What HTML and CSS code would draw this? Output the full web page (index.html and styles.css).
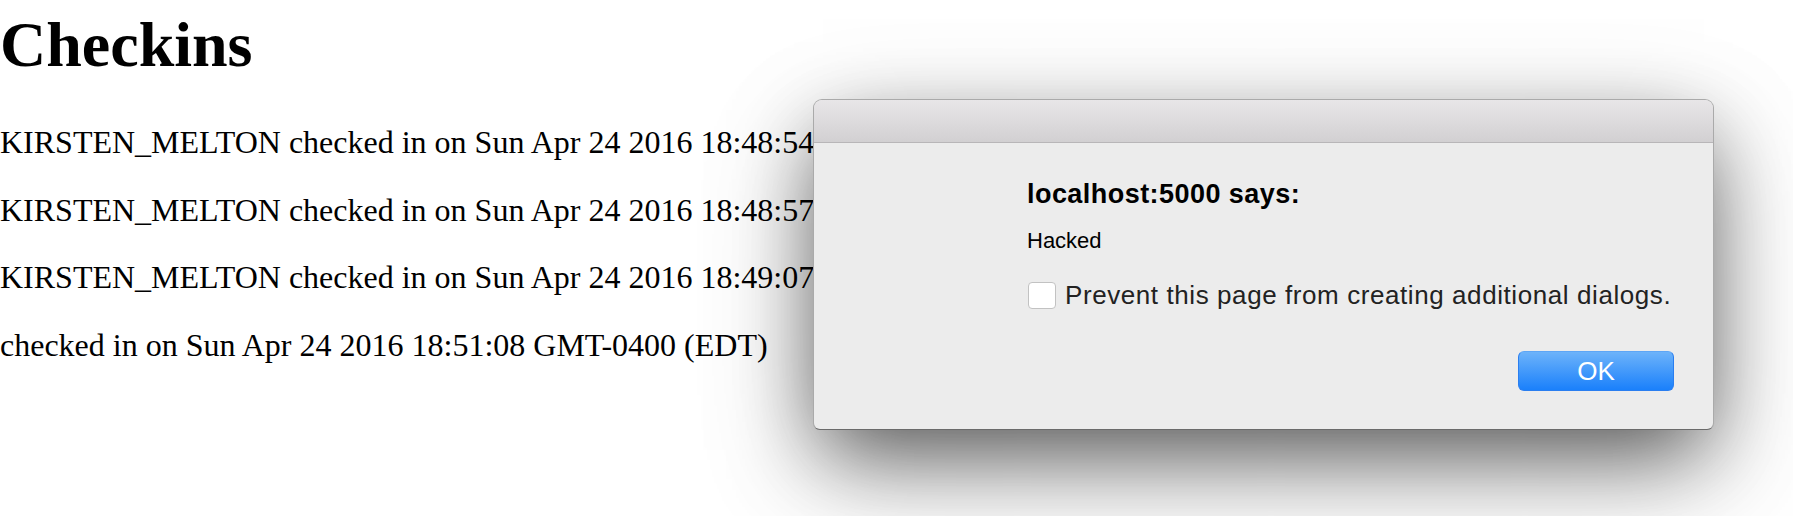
FILE: index.html
```html
<!DOCTYPE html>
<html>
<head>
<meta charset="utf-8">
<title>Checkins</title>
<link rel="stylesheet" href="styles.css">
</head>
<body>
<main class="page">
  <h1 class="title">Checkins</h1>
  <p class="checkin">KIRSTEN_MELTON checked in on Sun Apr 24 2016 18:48:54 GMT-0400 (EDT)</p>
  <p class="checkin">KIRSTEN_MELTON checked in on Sun Apr 24 2016 18:48:57 GMT-0400 (EDT)</p>
  <p class="checkin">KIRSTEN_MELTON checked in on Sun Apr 24 2016 18:49:07 GMT-0400 (EDT)</p>
  <p class="checkin"> checked in on Sun Apr 24 2016 18:51:08 GMT-0400 (EDT)</p>
</main>

<div class="dialog" role="alertdialog">
  <div class="dialog-titlebar"></div>
  <div class="dialog-body">
    <div class="dialog-heading">localhost:5000 says:</div>
    <div class="dialog-message">Hacked</div>
    <label class="dialog-check">
      <span class="checkbox"></span>
      <span class="check-label">Prevent this page from creating additional dialogs.</span>
    </label>
    <div class="dialog-actions">
      <button class="ok-button" type="button">OK</button>
    </div>
  </div>
</div>
</body>
</html>
```
FILE: styles.css
```css
html, body {
  margin: 0;
  padding: 0;
  background: #ffffff;
}

body {
  font-family: "Liberation Serif", "Times New Roman", serif;
  color: #000;
  overflow: hidden;
}

.page {
  padding: 0;
}

.title {
  font-size: 64px;
  line-height: 64px;
  font-weight: bold;
  margin: 13px 0 48px 0;
}

.checkin {
  font-size: 32px;
  line-height: 35.6px;
  margin: 32px 0;
  white-space: nowrap;
}

/* alert dialog overlay */
.dialog {
  position: absolute;
  left: 813px;
  top: 99px;
  width: 901px;
  height: 331px;
  box-sizing: border-box;
  background: #ececec;
  border: 1px solid rgba(0, 0, 0, 0.28);
  border-bottom-color: rgba(0, 0, 0, 0.55);
  border-radius: 9px 9px 7px 7px;
  box-shadow: 0 30px 80px -10px rgba(0, 0, 0, 0.6),
              0 40px 120px 0 rgba(0, 0, 0, 0.2);
  display: flex;
  flex-direction: column;
  font-family: "Liberation Sans", Arial, sans-serif;
  overflow: hidden;
}

.dialog-titlebar {
  height: 42px;
  flex: none;
  background: linear-gradient(to bottom, #e8e6e8, #d2d0d2);
  border-bottom: 1px solid #b8b6b8;
  border-radius: 8px 8px 0 0;
}

.dialog-body {
  flex: 1;
  display: flex;
  flex-direction: column;
  padding: 36px 39px 0 213px;
}

.dialog-heading {
  font-size: 27px;
  line-height: 30px;
  font-weight: bold;
  letter-spacing: 0.45px;
  color: #000;
}

.dialog-message {
  margin-top: 19px;
  font-size: 22px;
  line-height: 26px;
  color: #000;
}

.dialog-check {
  margin-top: 26px;
  display: flex;
  align-items: flex-start;
  gap: 9px;
}

.checkbox {
  display: block;
  flex: none;
  width: 26px;
  height: 25px;
  margin: 2px 0 0 1px;
  background: #ffffff;
  border: 1px solid #c2c2c2;
  border-radius: 4px;
}

.check-label {
  font-size: 26px;
  line-height: 30px;
  letter-spacing: 0.58px;
  color: #222;
  white-space: nowrap;
}

.dialog-actions {
  margin-top: 41px;
  display: flex;
  justify-content: flex-end;
}

.ok-button {
  width: 156px;
  height: 40px;
  padding: 0;
  box-sizing: border-box;
  border: 1px solid #2a7ef0;
  border-top-color: #5ea6f6;
  border-radius: 6px;
  background: linear-gradient(to bottom, #6db3fa, #1a80fb);
  color: #ffffff;
  font-family: "Liberation Sans", Arial, sans-serif;
  font-size: 26px;
  line-height: 38px;
}
```
